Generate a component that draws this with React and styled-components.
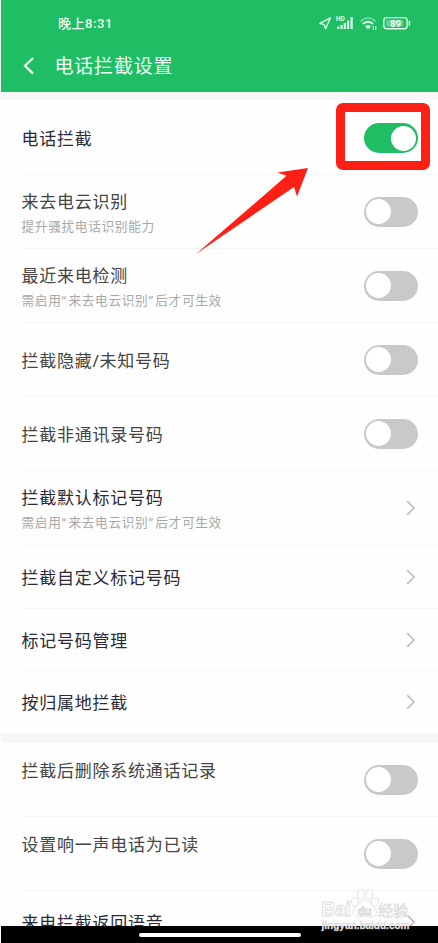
import React from 'react';
import styled, { createGlobalStyle } from 'styled-components';

const GlobalStyle = createGlobalStyle`
  * { box-sizing: border-box; }
  body {
    margin: 0;
    background: #fff;
    font-family: "Noto Sans", "Noto Sans CJK SC", sans-serif;
  }
`;

const Screen = styled.div`
  position: relative;
  display: flex;
  flex-direction: column;
  width: 438px;
  height: 943px;
  padding-left: 1px;
  overflow: hidden;
  background: #fefefe;
`;

const Header = styled.header`
  flex: none;
  height: 92px;
  background: #1fbe65;
  color: #f0fff5;
`;

const StatusBar = styled.div`
  display: flex;
  align-items: center;
  justify-content: space-between;
  height: 46px;
  padding: 0 27px 0 57px;
`;

const Clock = styled.span`
  padding-top: 2px;
  font: 500 13px/20px Roboto, "Noto Sans CJK SC", sans-serif;
  letter-spacing: 0.55px;
`;

const StatusIcons = styled.svg`
  display: block;
  width: 93px;
  height: 20px;
`;

const TitleBar = styled.div`
  display: flex;
  align-items: center;
  height: 40px;
  padding-left: 21px;
`;

const BackIcon = styled.svg`
  width: 14px;
  height: 20px;
  margin-right: 18.5px;
`;

const PageTitle = styled.h1`
  margin: 0;
  font-size: 19px;
  font-weight: 400;
  line-height: 28px;
  letter-spacing: 0.8px;
`;

const Gap = styled.div`
  flex: none;
  height: ${(p) => p.$size}px;
  background: #f7f7f7;
`;

const List = styled.div`
  display: flex;
  flex-direction: column;
  flex: none;
  padding-left: 20px;
`;

const Row = styled.div`
  display: flex;
  align-items: center;
  justify-content: space-between;
  height: ${(p) => p.$height}px;
  padding-top: ${(p) => (p.$lead ? 2 : 0)}px;
  padding-right: ${(p) => (p.$link ? 22 : 20)}px;
  border-bottom: ${(p) => (p.$last ? 0 : 1)}px solid #f5f5f5;
`;

const Labels = styled.div`
  display: flex;
  flex-direction: column;
  gap: ${(p) => (p.$raised ? 0 : 1)}px;
  padding-top: ${(p) => p.$drop}px;
  padding-bottom: ${(p) => (p.$raised ? 18 : 0)}px;
  padding-left: 0.5px;
`;

const Label = styled.span`
  font-size: 17px;
  line-height: 24px;
  letter-spacing: 0.75px;
  color: ${(p) => (p.$strong ? '#2b2a36' : '#444')};
  white-space: nowrap;
`;

const Hint = styled.span`
  font-size: 12.7px;
  line-height: 22px;
  letter-spacing: 0.65px;
  color: #a8a8a8;
  white-space: nowrap;
`;

const Quote = styled.span`
  letter-spacing: 2.3px;
`;

const Switch = styled.span`
  display: flex;
  justify-content: ${(p) => (p.$on ? 'flex-end' : 'flex-start')};
  width: 54px;
  height: 30px;
  padding: 2.5px 2px;
  border-radius: 15px;
  background: ${(p) => (p.$on ? '#1fbe65' : '#c9c9c9')};
`;

const Knob = styled.span`
  width: 25px;
  height: 25px;
  border-radius: 50%;
  background: #fff;
`;

const Chevron = styled.svg`
  width: 10px;
  height: 16px;
`;

const NavBar = styled.div`
  position: absolute;
  left: 1px;
  right: 0;
  bottom: 0;
  display: flex;
  justify-content: center;
  align-items: center;
  height: 17px;
  background: #000;
`;

const HomeHandle = styled.div`
  width: 162px;
  height: 4px;
  margin-top: 1px;
  border-radius: 2px;
  background: #fff;
`;

const Highlight = styled.div`
  position: absolute;
  left: 336px;
  top: 103px;
  width: 94px;
  height: 67px;
  border: 9px solid #ff2015;
  border-radius: 7px;
`;

const Pointer = styled.svg`
  position: absolute;
  left: 190px;
  top: 160px;
  width: 124px;
  height: 100px;
`;

const Watermark = styled.svg`
  position: absolute;
  left: 316px;
  top: 882px;
  width: 100px;
  height: 54px;
  font-family: "Liberation Sans", "Noto Sans CJK SC", sans-serif;
`;

const general = [
  { label: '电话拦截', height: 75, on: true, strong: true, lead: true },
  { label: '来去电云识别', hint: '提升骚扰电话识别能力', height: 74, drop: 4 },
  { label: '最近来电检测', hint: '需启用“来去电云识别”后才可生效', height: 74, drop: 4 },
  { label: '拦截隐藏/未知号码', height: 74 },
  { label: '拦截非通讯录号码', height: 74 },
  { label: '拦截默认标记号码', hint: '需启用“来去电云识别”后才可生效', height: 75, link: true, strong: true },
  { label: '拦截自定义标记号码', height: 63, link: true, strong: true },
  { label: '标记号码管理', height: 62, link: true, strong: true },
  { label: '按归属地拦截', height: 62, link: true, strong: true, last: true },
];

const records = [
  { label: '拦截后删除系统通话记录', height: 74, raised: true, drop: 0 },
  { label: '设置响一声电话为已读', height: 74, raised: true, drop: 0 },
  { label: '来电拦截返回语音', height: 62, link: true, strong: true },
];

function HintText({ text }) {
  return (
    <Hint>
      {text.split(/([“”])/).map((part, i) => (
        i % 2 ? <Quote key={i}>{part}</Quote> : part
      ))}
    </Hint>
  );
}

function SettingRow({ item }) {
  return (
    <Row $height={item.height} $link={item.link} $last={item.last} $lead={item.lead}>
      <Labels $raised={item.raised} $drop={item.drop ?? 2}>
        <Label $strong={item.strong}>{item.label}</Label>
        {item.hint && <HintText text={item.hint} />}
      </Labels>
      {item.link ? (
        <Chevron viewBox="0 0 10 16" fill="none" stroke="#bfbfbf" strokeWidth="1.7">
          <path d="M1.2 1.2L8 8L1.2 14.8" />
        </Chevron>
      ) : (
        <Switch $on={item.on}><Knob /></Switch>
      )}
    </Row>
  );
}

function Status() {
  return (
    <StatusIcons viewBox="318 13 93 20" fill="none" stroke="#dcffe8">
      <path d="M330.5 17.8L319.8 23.3L324.2 24.7L325.6 28.8Z" strokeWidth="1.3" strokeLinejoin="round" />
      <text x="336" y="21" fontSize="6.5" fontWeight="700" fontFamily="Roboto, sans-serif" fill="#dcffe8" stroke="none">HD</text>
      <path d="M338.2 29v-2.5M341.5 29v-4M344.8 29v-6M348.1 29v-8.5M351.6 29v-12" strokeWidth="2.2" />
      <path d="M360.5 21.5Q368 14.5 375.7 21.5" strokeWidth="1.6" opacity="0.5" />
      <path d="M362.8 24Q368 19.5 373.2 24" strokeWidth="1.8" />
      <path d="M365 26.4Q368 23.7 371 26.4L368 29.3Z" fill="#dcffe8" stroke="none" />
      <path d="M373.3 26v4M375.8 26v4" strokeWidth="1" />
      <rect x="383.8" y="17.6" width="23.4" height="11.2" rx="3" strokeWidth="1.4" />
      <rect x="386" y="19.8" width="17" height="6.8" rx="1" fill="#62d391" stroke="none" />
      <path d="M409.4 21.5v3.5" strokeWidth="1.5" strokeLinecap="round" />
      <text x="395.5" y="26.6" textAnchor="middle" fontSize="9.5" fontWeight="700" fontFamily="Roboto, sans-serif" fill="#f4fff8" stroke="none">89</text>
    </StatusIcons>
  );
}

function BaiduMark() {
  return (
    <Watermark viewBox="316 882 100 54">
      <g fill="#fff" fillOpacity="0.85" stroke="#dfdfdf" strokeWidth="0.9">
        <text x="321" y="916" fontSize="20" fontWeight="700" textLength="30">Bai</text>
        <ellipse cx="355" cy="902" rx="3.4" ry="4.3" transform="rotate(-15 355 902)" />
        <ellipse cx="361" cy="894.5" rx="3.3" ry="4.8" />
        <ellipse cx="369.3" cy="894.5" rx="3.3" ry="4.8" />
        <ellipse cx="375" cy="902" rx="3.4" ry="4.2" transform="rotate(15 375 902)" />
        <path d="M365 900C361 900 360 904 356 907C351 911 353 917 358 917Q365 915 371 917C377 917 378 911 374 907C370 904 369 900 365 900Z" />
        <text x="357.5" y="914.5" fontSize="11.5" fontWeight="700" textLength="14" stroke="#d4d4d4">du</text>
        <text x="378" y="915.5" fontSize="15" fontWeight="400" textLength="30" stroke="#dadada" strokeWidth="0.7">经验</text>
      </g>
      <text x="321.5" y="929" fontSize="10" fontWeight="700" textLength="88" fill="#f2f2f2" stroke="#c8c8c8" strokeWidth="0.3">jingyan.baidu.com</text>
    </Watermark>
  );
}

export default function App() {
  return (
    <>
      <GlobalStyle />
      <Screen>
        <Header>
          <StatusBar>
            <Clock>晚上8:31</Clock>
            <Status />
          </StatusBar>
          <TitleBar>
            <BackIcon viewBox="0 0 14 20" fill="none" stroke="#f0fff5" strokeWidth="2.3">
              <path d="M11 2L3 9.8L11 17.6" />
            </BackIcon>
            <PageTitle>电话拦截设置</PageTitle>
          </TitleBar>
        </Header>
        <Gap $size={8} />
        <List>{general.map((item) => <SettingRow key={item.label} item={item} />)}</List>
        <Gap $size={10} />
        <List>{records.map((item) => <SettingRow key={item.label} item={item} />)}</List>
        <NavBar><HomeHandle /></NavBar>
        <Highlight />
        <Pointer viewBox="190 160 124 100">
          <path d="M196 254L286.5 175.8L277.5 172.5L308 168L297 196.5L294 187Z" fill="#ff2015" />
        </Pointer>
        <BaiduMark />
      </Screen>
    </>
  );
}
